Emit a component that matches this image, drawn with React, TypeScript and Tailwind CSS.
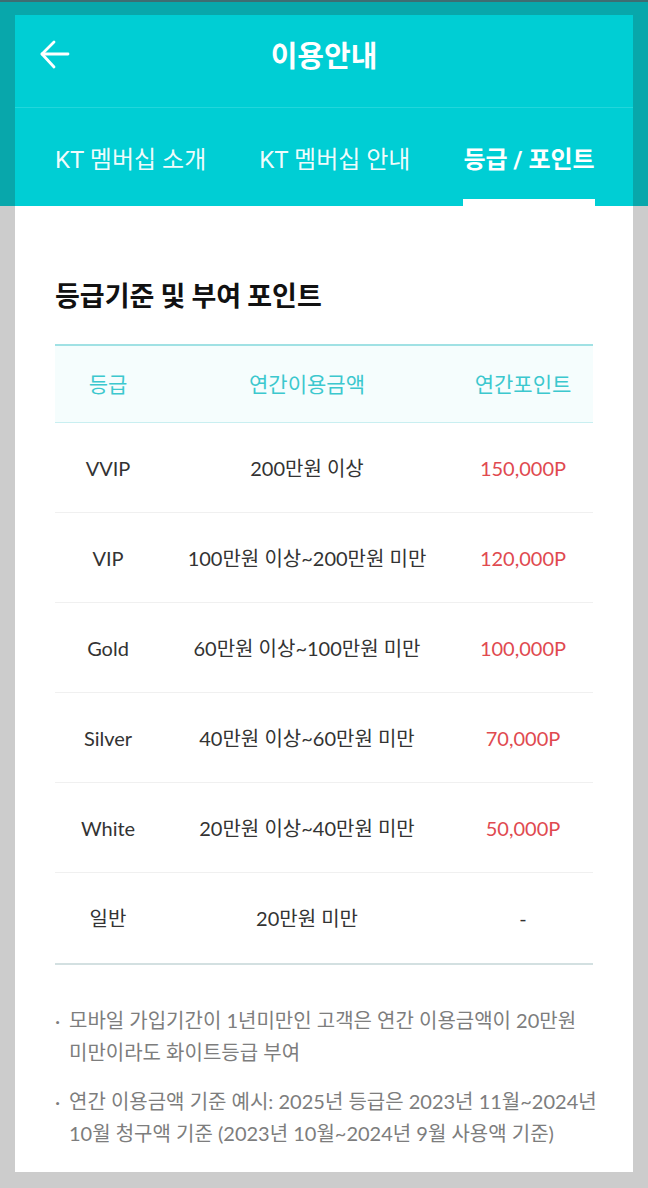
import React from "react";

const rows = [
  { g: "VVIP", a: "200만원 이상", p: "150,000P" },
  { g: "VIP", a: "100만원 이상~200만원 미만", p: "120,000P" },
  { g: "Gold", a: "60만원 이상~100만원 미만", p: "100,000P" },
  { g: "Silver", a: "40만원 이상~60만원 미만", p: "70,000P" },
  { g: "White", a: "20만원 이상~40만원 미만", p: "50,000P" },
  { g: "일반", a: "20만원 미만", p: "-" },
];

export default function App() {
  return (
    <div className="w-[648px] h-[1188px] overflow-hidden border-t-2 border-[#3e6d72] pt-[13px] px-[15px] bg-[linear-gradient(to_bottom,#08a7ab_204px,#cccccc_204px)]">
      <div className="h-[1157px] bg-white flex flex-col">
        {/* Header */}
        <div className="bg-[#00ced4] text-white font-['Roboto','Noto_Sans_CJK_KR',sans-serif]">
          <div className="relative h-[93px] flex items-center justify-center pb-[8px] border-b border-[#22d6db]">
            <button className="absolute left-[24px] top-[24px] w-[32px] h-[32px] flex items-center justify-center">
              <svg width="32" height="32" viewBox="0 0 32 32" fill="none" stroke="white" strokeWidth="2.8" strokeLinecap="round" strokeLinejoin="round">
                <path d="M3 15h26" />
                <path d="M15 3L3 15l12 13" />
              </svg>
            </button>
            <h1 className="text-[29px] font-bold leading-none">이용안내</h1>
          </div>
          <div className="h-[98px] flex items-stretch pl-[40px] gap-[53px] whitespace-nowrap">
            <div className="shrink-0 flex items-center pt-[6px] text-[24px] leading-none text-white/95">KT 멤버십 소개</div>
            <div className="shrink-0 flex items-center pt-[6px] text-[24px] leading-none text-white/95">KT 멤버십 안내</div>
            <div className="shrink-0 relative flex items-center pt-[6px] text-[24px] leading-none font-bold">
              등급 / 포인트
              <div className="absolute left-0 right-0 bottom-0 h-[7px] bg-white" />
            </div>
          </div>
        </div>

        {/* Body */}
        <div className="px-[40px] pt-[71px] font-['Lato','Noto_Sans_CJK_KR',sans-serif]">
          <h2 className="text-[27px] leading-[36px] font-bold text-[#111] font-['Noto_Sans_CJK_KR',sans-serif]">
            등급기준 및 부여 포인트
          </h2>

          <div className="mt-[31px] border-t-2 border-[#a0e1e4] border-b-2 border-b-[#d3e0e1]">
            <div className="grid grid-cols-[106px_292px_140px] h-[77px] bg-[#f5fdfd] border-b border-[#c9eff1] items-center text-[21px] text-[#3cc8ce] text-center">
              <div>등급</div>
              <div>연간이용금액</div>
              <div>연간포인트</div>
            </div>
            {rows.map((r, i) => (
              <div
                key={r.g}
                className={`grid grid-cols-[106px_292px_140px] h-[90px] items-center text-center text-[20px] ${
                  i < rows.length - 1 ? "border-b border-[#f0f0f0]" : ""
                }`}
              >
                <div className="text-[#333]">{r.g}</div>
                <div className="text-[#333]">{r.a}</div>
                <div className={r.p === "-" ? "text-[#333]" : "text-[#e04a50]"}>{r.p}</div>
              </div>
            ))}
          </div>

          <ul className="mt-[39px] text-[20px] leading-[32px] text-[#7d7d7d] flex flex-col gap-[17px]">
            <li className="flex">
              <span className="w-[14px] shrink-0">·</span>
              <span className="whitespace-nowrap">
                모바일 가입기간이 1년미만인 고객은 연간 이용금액이 20만원
                <br />
                미만이라도 화이트등급 부여
              </span>
            </li>
            <li className="flex">
              <span className="w-[14px] shrink-0">·</span>
              <span className="whitespace-nowrap">
                연간 이용금액 기준 예시: 2025년 등급은 2023년 11월~2024년
                <br />
                10월 청구액 기준 (2023년 10월~2024년 9월 사용액 기준)
              </span>
            </li>
          </ul>
        </div>
      </div>
    </div>
  );
}
